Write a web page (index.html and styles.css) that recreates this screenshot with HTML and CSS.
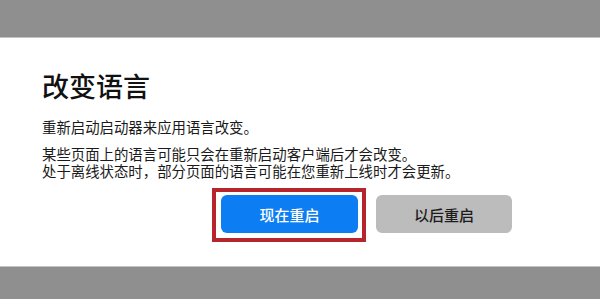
FILE: index.html
```html
<!DOCTYPE html>
<html>
<head>
  <meta charset="utf-8">
  <link rel="stylesheet" href="styles.css">
</head>
<body class="body">
<div class="band top"></div>
<div class="dialog">
  <h1 class="title">改变语言</h1>
  <p class="text">重新启动启动器来应用语言改变。</p>
  <p class="text">某些页面上的语言可能只会在重新启动客户端后才会改变。<br>
处于离线状态时，部分页面的语言可能在您重新上线时才会更新。</p>
  <div class="buttons">
    <span class="button primary marked">现在重启</span>
    <span class="button secondary">以后重启</span>
  </div>
</div>
<div class="band bottom"></div>
</body>
</html>
```

FILE: styles.css
```css
.body { margin:0; background:#FFFFFF; font-family:"Noto Sans CJK SC","Noto Sans",sans-serif; color:#1a1a1a; }
.band { background:#8f8f8f; }
.top { height:37px; border-bottom:1px solid #c4c4c4; }
.bottom { height:32px; border-top:1px solid #c4c4c4; }
.dialog { height:228px; box-sizing:border-box; padding:32px 0 0 42px; }
.title { margin:0; font-size:27px; line-height:32px; font-weight:500; color:#111; }
.text { margin:16px 0 0; font-size:14.4px; line-height:17px; }
.text + .text { margin-top:10px; }
.buttons { display:flex; gap:18px; margin:16px 0 0 179px; }
.button { width:137px; height:38px; border-radius:6px; display:flex; align-items:center; justify-content:center; font-size:15px; font-weight:500; }
.primary { background:#0c7df2; color:#FFFFFF; }
.secondary { background:#bcbcbc; color:#1c1c1c; width:136px; }
.marked { position:relative; }
.marked::after { content:""; position:absolute; top:-7px; left:-9px; right:-8px; bottom:-9px; border:4px solid #b5252b; }
```
